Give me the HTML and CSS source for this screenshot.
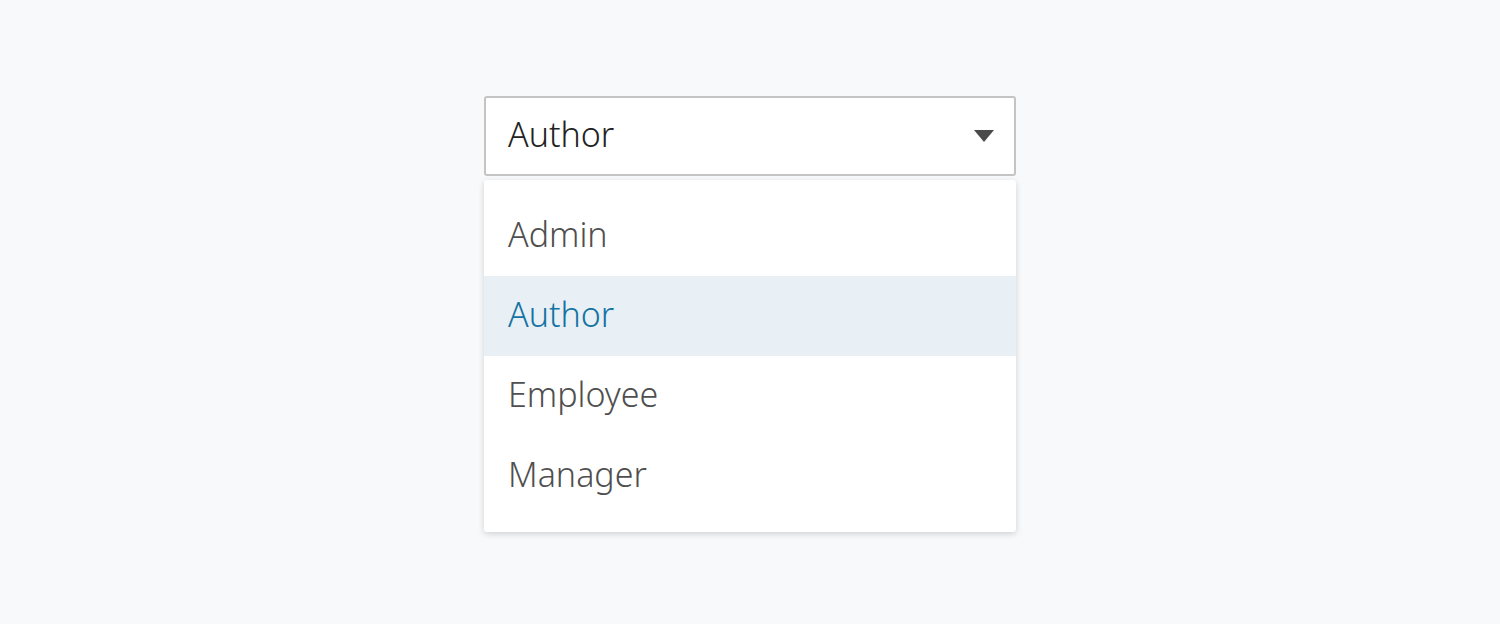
FILE: index.html
```html
<!DOCTYPE html>
<html>
<head>
<meta charset="utf-8">
<link rel="stylesheet" href="styles.css">
</head>
<body>
<div class="wrap">
  <div class="select">
    <span class="value">Author</span>
    <svg class="caret" width="20" height="12" viewBox="0 0 20 12"><path d="M0 0 H20 L10 12 Z" fill="#4a4a4a"/></svg>
  </div>
  <ul class="menu">
    <li class="item">Admin</li>
    <li class="item selected">Author</li>
    <li class="item">Employee</li>
    <li class="item">Manager</li>
  </ul>
</div>
</body>
</html>
```
FILE: styles.css
```css
html, body { margin: 0; padding: 0; }
body {
  background: #f8f9fb;
  font-family: "Noto Sans", "Open Sans", sans-serif;
  width: 1500px;
  height: 624px;
}
.wrap {
  width: 532px;
  margin: 0 auto;
  padding-top: 96px;
}
.select {
  box-sizing: border-box;
  height: 80px;
  border: 2px solid #c4c4c4;
  border-radius: 3px;
  background: #fff;
  display: flex;
  align-items: center;
  justify-content: space-between;
  padding: 0 20px 4px 22px;
}
.value { font-size: 34px; font-weight: 350; color: #222; line-height: 1; }
.caret { display: block; margin-top: 4px; }
.menu {
  list-style: none;
  margin: 4px 0 0 0;
  padding: 16px 0;
  background: #fff;
  border-radius: 3px;
  box-shadow: 0 2px 6px rgba(0,0,0,0.16);
}
.item {
  box-sizing: border-box;
  height: 80px;
  display: flex;
  align-items: center;
  padding: 0 0 4px 24px;
  font-size: 34px;
  font-weight: 350;
  line-height: 1;
  color: #4f4f4f;
}
.item.selected { background: #e8f0f6; color: #1573a3; }
```
